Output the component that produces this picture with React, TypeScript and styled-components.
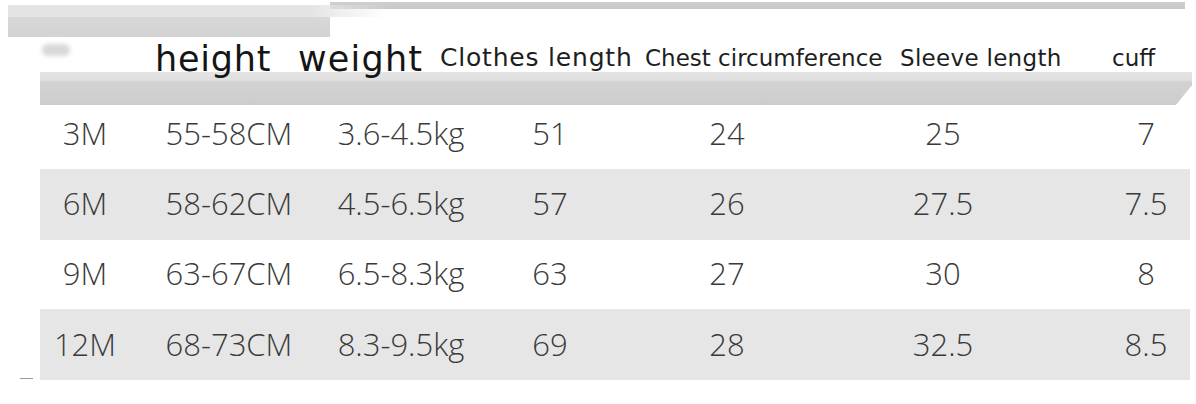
import React from "react";
import styled, { createGlobalStyle } from "styled-components";

const Global = createGlobalStyle`
  html, body { margin: 0; padding: 0; background: #ffffff; }
  body { width: 1196px; height: 404px; overflow: hidden; font-family: "Open Sans", "Noto Sans", sans-serif; }
`;

const Chart = styled.div`
  position: relative;
  width: 1196px;
  height: 404px;
  background: #fff;
`;

const TopStrip = styled.div`
  height: 40px;
  margin-left: 8px;
  background:
    linear-gradient(to bottom, transparent 0, transparent 17px, #d8d8d8 17px, #d3d3d3 37px, transparent 37px) 0 0 / 322px 40px no-repeat,
    linear-gradient(to right, #e4e4e4 0, #e4e4e4 300px, rgba(228,228,228,0) 380px) 0 5px / 380px 12px no-repeat,
    linear-gradient(to bottom, transparent 0, transparent 2px, #cfcfcf 2px, #c9c9c9 9px, transparent 9px) 322px 0 / 855px 40px no-repeat;
`;

const HeaderRow = styled.div`
  position: relative;
  z-index: 1;
  height: 32px;
  display: flex;
  align-items: baseline;
  padding-left: 155px;
  font-family: "DejaVu Sans", "Open Sans", sans-serif;
  &::before {
    content: "";
    position: absolute;
    left: 42px;
    top: 4px;
    width: 28px;
    height: 12px;
    border-radius: 6px;
    background: #d8d8d8;
    filter: blur(2px);
  }
`;

const HeadCell = styled.div<{ $w: number; $size: number; $ls: number; $big?: boolean }>`
  width: ${(p) => p.$w}px;
  flex: none;
  white-space: nowrap;
  color: ${(p) => (p.$big ? "#151515" : "#1e1e1e")};
  font-size: ${(p) => p.$size}px;
  letter-spacing: ${(p) => p.$ls}px;
  line-height: 1;
  transform: translateY(${(p) => (p.$big ? 2 : -3)}px);
`;

const HeadBand = styled.div`
  margin-left: 40px;
  width: 1152px;
  height: 33px;
  background: linear-gradient(to bottom, #e4e4e4 0, #e0e0e0 8px, #d2d2d2 10px, #cdcdcd 33px);
  clip-path: polygon(0 0, 100% 0, 100% 40%, 98.6% 100%, 0 100%);
`;

const Rows = styled.div`
  margin-left: 40px;
  width: 1150px;
`;

const Row = styled.div<{ $shade: boolean; $h: number; $lift: number }>`
  display: grid;
  grid-template-columns: 90px 198px 146px 152px 202px 230px 132px;
  align-items: center;
  height: ${(p) => p.$h}px;
  box-sizing: border-box;
  padding-bottom: ${(p) => p.$lift}px;
  background: ${(p) => (p.$shade ? "#e6e6e6" : "#ffffff")};
`;

const Cell = styled.div<{ $pl?: number }>`
  text-align: center;
  padding-left: ${(p) => p.$pl ?? 0}px;
  font-size: 31px;
  font-weight: 300;
  color: #3a3a3a;
  white-space: nowrap;
  line-height: 1;
`;

const Dash = styled.div`
  position: absolute;
  left: 20px;
  top: 378px;
  width: 13px;
  height: 1px;
  background: #9a9a9a;
`;

const headers: { t: string; w: number; size: number; ls: number; big?: boolean }[] = [
  { t: "height", w: 143, size: 35, ls: 0.8, big: true },
  { t: "weight", w: 142, size: 35, ls: 1.2, big: true },
  { t: "Clothes length", w: 205, size: 25, ls: 0.8 },
  { t: "Chest circumference", w: 255, size: 23, ls: 0 },
  { t: "Sleeve length", w: 212, size: 23, ls: 0.3 },
  { t: "cuff", w: 60, size: 23, ls: 0 },
];

const data = [
  ["3M", "55-58CM", "3.6-4.5kg", "51", "24", "25", "7"],
  ["6M", "58-62CM", "4.5-6.5kg", "57", "26", "27.5", "7.5"],
  ["9M", "63-67CM", "6.5-8.3kg", "63", "27", "30", "8"],
  ["12M", "68-73CM", "8.3-9.5kg", "69", "28", "32.5", "8.5"],
];

const heights = [64, 71, 69, 71];
const lifts = [8, 2, 2, 0];

export default function App() {
  return (
    <Chart>
      <Global />
      <TopStrip />
      <HeaderRow>
        {headers.map((h) => (
          <HeadCell key={h.t} $w={h.w} $size={h.size} $ls={h.ls} $big={h.big}>
            {h.t}
          </HeadCell>
        ))}
      </HeaderRow>
      <HeadBand />
      <Rows>
        {data.map((r, i) => (
          <Row key={r[0]} $shade={i % 2 === 1} $h={heights[i]} $lift={lifts[i]}>
            {r.map((c, j) => (
              <Cell key={j} $pl={j === 6 ? 44 : 0}>
                {c}
              </Cell>
            ))}
          </Row>
        ))}
      </Rows>
      <Dash />
    </Chart>
  );
}
